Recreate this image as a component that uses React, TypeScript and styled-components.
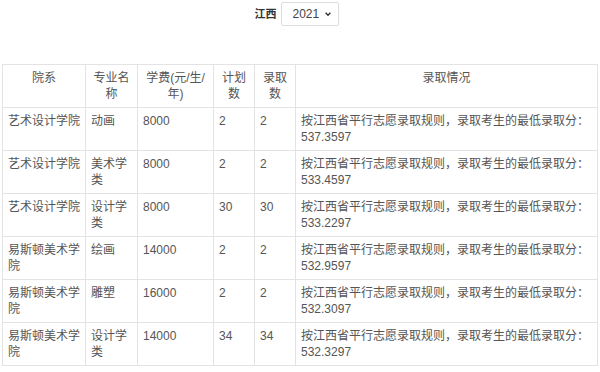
import styled, { createGlobalStyle } from "styled-components";

const GlobalStyle = createGlobalStyle`
  body {
    margin: 0;
    background: #fff;
    font-family: "Liberation Sans", "Noto Sans CJK SC", sans-serif;
    text-spacing-trim: space-all;
  }
`;

type Row = {
  dept: string;
  major: string;
  fee: string;
  plan: string;
  admit: string;
  score: string;
};

const rows: Row[] = [
  { dept: "艺术设计学院", major: "动画", fee: "8000", plan: "2", admit: "2", score: "537.3597" },
  { dept: "艺术设计学院", major: "美术学类", fee: "8000", plan: "2", admit: "2", score: "533.4597" },
  { dept: "艺术设计学院", major: "设计学类", fee: "8000", plan: "30", admit: "30", score: "533.2297" },
  { dept: "易斯顿美术学院", major: "绘画", fee: "14000", plan: "2", admit: "2", score: "532.9597" },
  { dept: "易斯顿美术学院", major: "雕塑", fee: "16000", plan: "2", admit: "2", score: "532.3097" },
  { dept: "易斯顿美术学院", major: "设计学类", fee: "14000", plan: "34", admit: "34", score: "532.3297" },
];

const headers = ["院系", "专业名称", "学费(元/生/年)", "计划数", "录取数", "录取情况"];
const widths = [83, 52, 76, 41, 41, 302];

export default function App() {
  return (
    <Page>
      <GlobalStyle />
      <Filter>
        <Label>江西</Label>
        <SelectWrap>
          <Select defaultValue="2021">
            <option value="2021">2021</option>
            <option value="2020">2020</option>
            <option value="2019">2019</option>
          </Select>
          <Chevron viewBox="0 0 10 10" aria-hidden>
            <path d="M2 3.5 L5 6.5 L8 3.5" />
          </Chevron>
        </SelectWrap>
      </Filter>
      <Table>
        <colgroup>
          {widths.map((w, i) => (
            <col key={i} style={{ width: w }} />
          ))}
        </colgroup>
        <thead>
          <tr>
            {headers.map((h) => (
              <Th key={h}>{h}</Th>
            ))}
          </tr>
        </thead>
        <tbody>
          {rows.map((r, i) => (
            <tr key={i}>
              <Td>{r.dept}</Td>
              <Td>{r.major}</Td>
              <Td>{r.fee}</Td>
              <Td>{r.plan}</Td>
              <Td>{r.admit}</Td>
              <Td>
                按江西省平行志愿录取规则，录取考生的最低录取分：{r.score}
              </Td>
            </tr>
          ))}
        </tbody>
      </Table>
    </Page>
  );
}

const Page = styled.div`
  width: 600px;
  padding: 2px 3px 0 2px;
  box-sizing: border-box;
`;

const Filter = styled.div`
  display: flex;
  justify-content: center;
  align-items: center;
  gap: 4px;
  margin-right: 6px;
  height: 24px;
`;

const Label = styled.span`
  font-size: 11px;
  font-weight: bold;
  color: #333;
  margin-top: -3px;
`;

const SelectWrap = styled.span`
  position: relative;
  display: inline-flex;
`;

const Select = styled.select`
  appearance: none;
  width: 58px;
  height: 24px;
  padding: 0 0 0 11px;
  border: 1px solid #ddd;
  border-radius: 2px;
  background: #fff;
  font-family: "Liberation Sans", sans-serif;
  font-size: 12px;
  color: #444;
  outline: none;
`;

const Chevron = styled.svg`
  position: absolute;
  right: 7px;
  top: 8px;
  width: 8px;
  height: 8px;
  fill: none;
  stroke: #333;
  stroke-width: 1.8;
  pointer-events: none;
`;

const Table = styled.table`
  margin-top: 38px;
  width: 595px;
  border-collapse: collapse;
  table-layout: fixed;
  font-size: 12px;
  line-height: 16px;
  color: #555;
`;

const Th = styled.th`
  border: 1px solid #e3e3e3;
  padding: 5px 4px;
  font-weight: normal;
  text-align: center;
  vertical-align: top;
`;

const Td = styled.td`
  border: 1px solid #e3e3e3;
  padding: 5px 3px 5px 5px;
  text-align: left;
  vertical-align: top;
  height: 32px;
`;
